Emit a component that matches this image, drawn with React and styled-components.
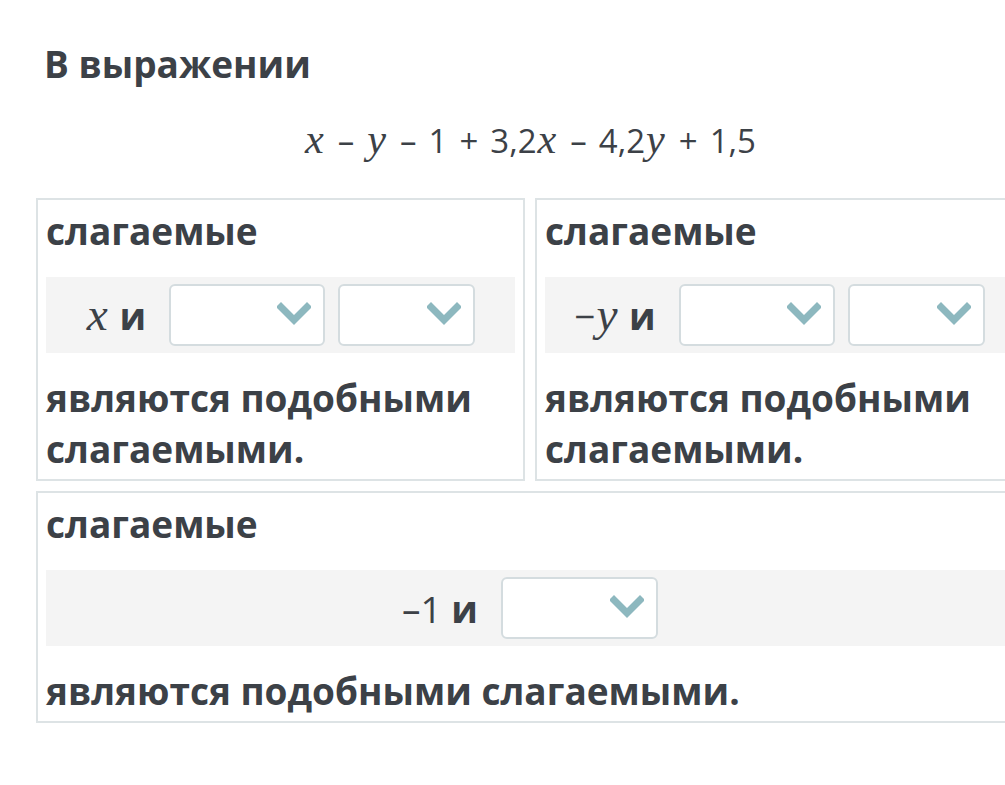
import React from 'react'
import styled, { createGlobalStyle } from 'styled-components'

const Global = createGlobalStyle`
  body {
    margin: 0;
    background: #fff;
    font-family: 'Open Sans', 'Liberation Sans', sans-serif;
    color: #3c4147;
    overflow: hidden;
  }
`

const Page = styled.div`
  width: 988px;
  padding: 38px 0 0 36px;
`

const Title = styled.h1`
  margin: 0 0 0 8px;
  font-size: 37px;
  font-weight: 700;
  line-height: 52px;
`

const Formula = styled.div`
  text-align: center;
  font-size: 33px;
  line-height: 44px;
  height: 44px;
  margin: 29px 0 35px;
  white-space: nowrap;
`

const Var = styled.span`
  font-family: 'Liberation Serif', 'DejaVu Serif', serif;
  font-style: italic;
  font-size: 1.28em;
  line-height: 0;
  margin: 0 2px 0 1px;
`

const Op = styled.span`
  margin: 0 12px;
`

const Grid = styled.div`
  display: grid;
  grid-template-columns: 1fr 1fr;
  gap: 10px;
`

const Card = styled.div`
  grid-column: ${p => (p.wide ? '1 / span 2' : 'auto')};
  border: 2px solid #dde3e5;
  padding: 6px 8px 5px;
`

const Label = styled.div`
  font-size: 37px;
  font-weight: 700;
  line-height: 50px;
`

const Band = styled.div`
  background: #f4f4f4;
  height: 76px;
  margin: 21px 0 19px;
  display: flex;
  align-items: center;
  justify-content: center;
  gap: 13px;
`

const Term = styled.span`
  font-size: 37px;
  line-height: 1;
  margin-right: 10px;
  white-space: nowrap;
  b { font-weight: 700; }
`

const Select = styled.div`
  box-sizing: border-box;
  width: ${p => p.w}px;
  height: 62px;
  background: #fff;
  border: 2px solid #d4dcdf;
  border-radius: 6px;
  display: flex;
  align-items: center;
  justify-content: flex-end;
  padding: 0 12px 2px 0;
`

const Chevron = () => (
  <svg width="34" height="24" viewBox="0 0 34 24">
    <path d="M4 5 L17 18 L30 5" fill="none" stroke="#8db8bf" strokeWidth="7" strokeLinecap="square" />
  </svg>
)

const Drop = ({ w }) => (
  <Select w={w}>
    <Chevron />
  </Select>
)

const Outro = styled.div`
  font-size: 37px;
  font-weight: 700;
  line-height: 51px;
`

export default function App() {
  return (
    <>
      <Global />
      <Page>
        <Title>В выражении</Title>
        <Formula>
          <Var>x</Var><Op>–</Op><Var>y</Var><Op>–</Op>1<Op>+</Op>3,2<Var>x</Var><Op>–</Op>4,2<Var>y</Var><Op>+</Op>1,5
        </Formula>
        <Grid>
          <Card>
            <Label>слагаемые</Label>
            <Band>
              <Term><Var>x</Var> <b>и</b></Term>
              <Drop w={156} />
              <Drop w={137} />
            </Band>
            <Outro>являются подобными слагаемыми.</Outro>
          </Card>
          <Card>
            <Label>слагаемые</Label>
            <Band>
              <Term>−<Var>y</Var> <b>и</b></Term>
              <Drop w={156} />
              <Drop w={137} />
            </Band>
            <Outro>являются подобными слагаемыми.</Outro>
          </Card>
          <Card wide>
            <Label>слагаемые</Label>
            <Band>
              <Term>–1 <b>и</b></Term>
              <Drop w={157} />
            </Band>
            <Outro>являются подобными слагаемыми.</Outro>
          </Card>
        </Grid>
      </Page>
    </>
  )
}
